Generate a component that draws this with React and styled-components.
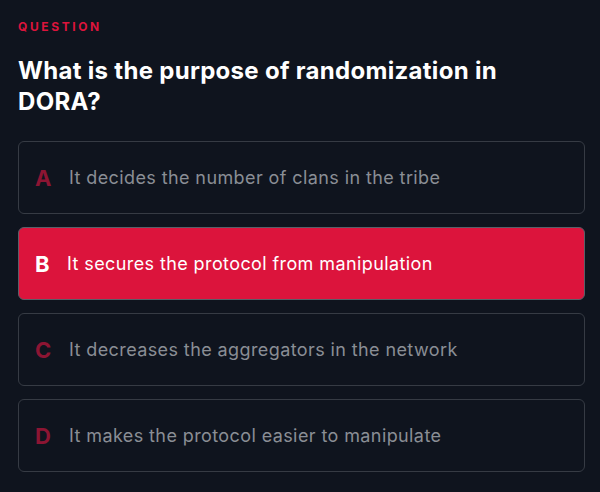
import styled, { createGlobalStyle } from 'styled-components';

const GlobalStyle = createGlobalStyle`
  html, body {
    margin: 0;
    padding: 0;
    background: #0f141e;
  }
  body {
    font-family: Inter, "Noto Sans", sans-serif;
  }
`;

const options = [
  { key: 'A', text: 'It decides the number of clans in the tribe' },
  { key: 'B', text: 'It secures the protocol from manipulation', selected: true },
  { key: 'C', text: 'It decreases the aggregators in the network' },
  { key: 'D', text: 'It makes the protocol easier to manipulate' },
];

export default function App() {
  return (
    <>
      <GlobalStyle />
      <Page>
        <Label>Question</Label>
        <Title>What is the purpose of randomization in DORA?</Title>
        <OptionList>
          {options.map((o) => (
            <Option key={o.key} $selected={o.selected}>
              <Letter $selected={o.selected}>{o.key}</Letter>
              <OptionText $selected={o.selected}>{o.text}</OptionText>
            </Option>
          ))}
        </OptionList>
      </Page>
    </>
  );
}

const Page = styled.div`
  width: 600px;
  height: 492px;
  box-sizing: border-box;
  padding: 19px 15px 0 18px;
  background: #0f141e;
`;

const Label = styled.div`
  color: #dc143c;
  font-size: 12px;
  font-weight: 700;
  letter-spacing: 2.6px;
  text-transform: uppercase;
  line-height: 15px;
`;

const Title = styled.h1`
  margin: 21px 0 0;
  max-width: 520px;
  color: #ffffff;
  font-size: 24px;
  font-weight: 700;
  letter-spacing: 0.3px;
  line-height: 31px;
`;

const OptionList = styled.div`
  display: flex;
  flex-direction: column;
  gap: 13px;
  margin-top: 24px;
`;

const Option = styled.div`
  display: flex;
  align-items: center;
  height: 73px;
  box-sizing: border-box;
  padding: 0 16px;
  border: 1px solid ${({ $selected }) => ($selected ? '#5a5f68' : '#363b44')};
  border-radius: 6px;
  background: ${({ $selected }) => ($selected ? '#dc143c' : 'transparent')};
`;

const Letter = styled.span`
  width: 34px;
  flex-shrink: 0;
  color: ${({ $selected }) => ($selected ? '#ffffff' : '#8c1533')};
  font-size: 22px;
  font-weight: 700;
`;

const OptionText = styled.span`
  margin-left: ${({ $selected }) => ($selected ? '-2px' : '0')};
  color: ${({ $selected }) => ($selected ? '#ffffff' : '#8a8e95')};
  font-size: 18px;
  letter-spacing: 0.4px;
`;
